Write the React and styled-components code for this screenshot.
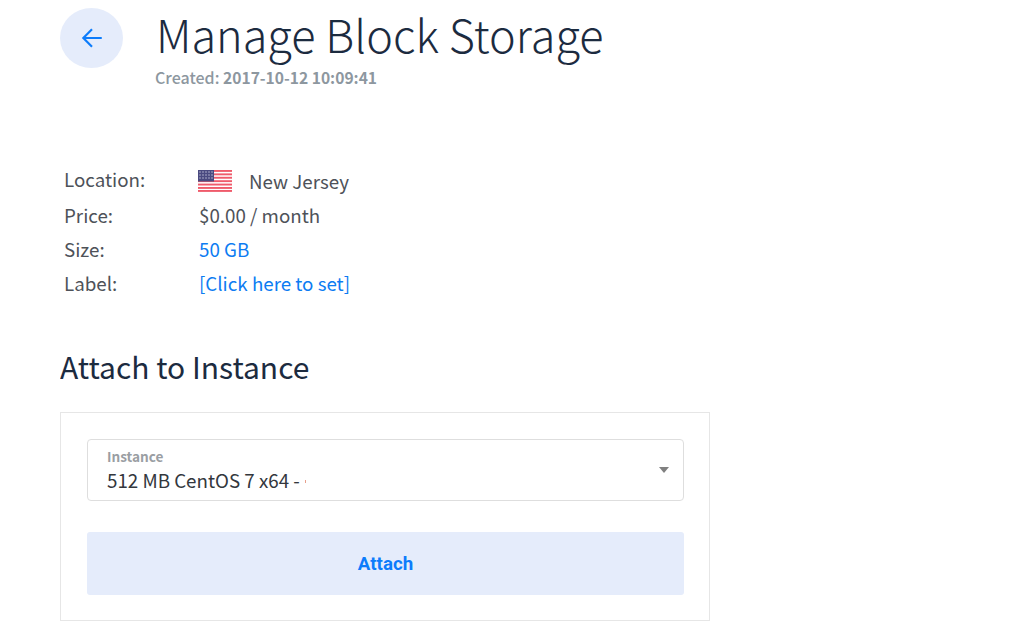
import React from "react";
import styled, { createGlobalStyle } from "styled-components";

const GlobalStyle = createGlobalStyle`
  html, body {
    margin: 0;
    background: #fff;
    font-family: "Noto Sans CJK SC", "Noto Sans", sans-serif;
  }
`;

const Page = styled.div`
  width: 650px;
  height: 630px;
  margin-left: 60px;
  overflow: hidden;
`;

const Header = styled.header`
  display: flex;
  align-items: flex-start;
  gap: 33px;
  height: 120px;
  padding-top: 8px;
  box-sizing: border-box;
`;

const BackButton = styled.button`
  width: 63px;
  height: 60px;
  flex: none;
  border: 0;
  padding: 0;
  border-radius: 50%;
  background: #e5ecfb;
  color: #0d7cfb;
  display: flex;
  align-items: center;
  justify-content: center;
`;

const TitleBlock = styled.div`
  margin-top: -3px;
`;

const Title = styled.h1`
  margin: 0;
  font-size: 45px;
  line-height: 57px;
  font-weight: 200;
  color: #1c2b3f;
  white-space: nowrap;
`;

const Created = styled.div`
  margin-left: -1px;
  font-size: 16px;
  line-height: 30px;
  color: #8d979f;
  font-weight: 500;
  white-space: nowrap;
  b {
    font-weight: 700;
    font-size: 15.6px;
  }
`;

const Details = styled.dl`
  margin: 44px 0 0 4px;
  display: grid;
  grid-template-columns: 135px 1fr;
  grid-auto-rows: 34px;
  align-items: center;
  font-size: 18.75px;
  color: #4e5259;
`;

const Term = styled.dt`
  line-height: 34px;
  position: relative;
  top: ${(p) => (p.$raised ? "-2px" : "0")};
`;

const Value = styled.dd`
  margin: 0;
  line-height: 34px;
  display: flex;
  align-items: center;
  color: ${(p) => (p.$link ? "#0d7cf2" : "#4e5259")};
`;

const Flag = styled.svg`
  width: 34px;
  height: 22px;
  margin: 0 17px 0 -1px;
`;

const Section = styled.h2`
  margin: 44px 0 0;
  font-size: 30px;
  line-height: 44px;
  font-weight: 400;
  color: #1c2b3f;
`;

const Card = styled.form`
  margin-top: 24px;
  border: 1px solid #e6e6e6;
  padding: 26px 25px 25px 26px;
  height: 209px;
  box-sizing: border-box;
`;

const Select = styled.div`
  position: relative;
  height: 62px;
  box-sizing: border-box;
  border: 1px solid #dedede;
  border-radius: 4px;
  padding: 6px 19px;
`;

const SelectLabel = styled.div`
  font-size: 13.6px;
  line-height: 20px;
  font-weight: 700;
  color: #9a9ea3;
`;

const SelectValue = styled.div`
  font-size: 18.75px;
  line-height: 28px;
  color: #33373d;
  display: flex;
  align-items: center;
`;

const Residue = styled.i`
  width: 1px;
  height: 3px;
  margin: 2px 0 0 5px;
  background: #e8a08c;
`;

const Caret = styled.span`
  position: absolute;
  right: 14px;
  top: 27px;
  width: 0;
  height: 0;
  border-left: 5px solid transparent;
  border-right: 5px solid transparent;
  border-top: 6px solid #808080;
`;

const AttachButton = styled.button`
  display: block;
  width: 100%;
  height: 63px;
  margin-top: 31px;
  border: 0;
  border-radius: 3px;
  background: #e5ecfb;
  color: #0d7cfb;
  font-family: Roboto, sans-serif;
  font-size: 18.7px;
  font-weight: 700;
`;

const UsFlag = () => (
  <Flag viewBox="0 0 34 22">
    <rect width="34" height="22" fill="#fff" />
    {[0, 3.4, 6.8, 10.2, 13.6, 17, 20].map((y) => (
      <rect key={y} y={y} width="34" height="1.9" fill="#ef5b6b" />
    ))}
    <rect width="16" height="11.5" fill="#4a4a80" />
    {[2, 5, 8].map((y) =>
      [2, 5, 8, 11, 14].map((x) => (
        <rect key={x + "-" + y} x={x - 0.6} y={y - 0.6} width="1.2" height="1.2" fill="#c9c9e0" />
      ))
    )}
  </Flag>
);

export default function App() {
  return (
    <Page>
      <GlobalStyle />
      <Header>
        <BackButton type="button" aria-label="Back">
          <svg width="26" height="26" viewBox="0 0 24 24" fill="none" stroke="currentColor" strokeWidth="2">
            <path d="M21 12H3.5M12 4l-8 8 8 8" />
          </svg>
        </BackButton>
        <TitleBlock>
          <Title>Manage Block Storage</Title>
          <Created>
            Created: <b>2017-10-12 10:09:41</b>
          </Created>
        </TitleBlock>
      </Header>
      <Details>
        <Term $raised>Location:</Term>
        <Value>
          <UsFlag />
          New Jersey
        </Value>
        <Term>Price:</Term>
        <Value>$0.00 / month</Value>
        <Term>Size:</Term>
        <Value $link>50 GB</Value>
        <Term>Label:</Term>
        <Value $link>[Click here to set]</Value>
      </Details>
      <Section>Attach to Instance</Section>
      <Card>
        <Select>
          <SelectLabel>Instance</SelectLabel>
          <SelectValue>
            512 MB CentOS 7 x64 -<Residue />
          </SelectValue>
          <Caret />
        </Select>
        <AttachButton type="button">Attach</AttachButton>
      </Card>
    </Page>
  );
}
